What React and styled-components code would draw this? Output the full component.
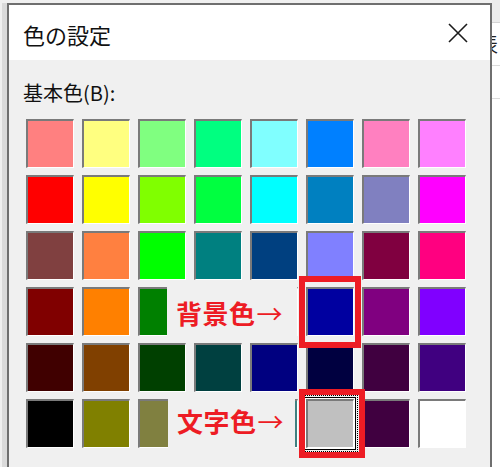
import React from 'react';
import styled, { createGlobalStyle, css } from 'styled-components';

const GlobalStyle = createGlobalStyle`
	html, body {
		margin: 0;
		padding: 0;
		background: #f0f0f0;
	}
	body {
		font-family: "Noto Sans CJK JP", "Noto Sans", sans-serif;
		width: 500px;
		height: 467px;
		overflow: hidden;
	}
`;

// Windows の基本色 48色
const COLORS = [
	['#ff8080', '#ffff80', '#80ff80', '#00ff80', '#80ffff', '#0080ff', '#ff80c0', '#ff80ff'],
	['#ff0000', '#ffff00', '#80ff00', '#00ff40', '#00ffff', '#0080c0', '#8080c0', '#ff00ff'],
	['#804040', '#ff8040', '#00ff00', '#008080', '#004080', '#8080ff', '#800040', '#ff0080'],
	['#800000', '#ff8000', '#008000', '#008040', '#0000ff', '#0000a0', '#800080', '#8000ff'],
	['#400000', '#804000', '#004000', '#004040', '#000080', '#000040', '#400040', '#400080'],
	['#000000', '#808000', '#808040', '#808080', '#408080', '#c0c0c0', '#400040', '#ffffff']
];

export default function App() {
	return (
		<>
			<GlobalStyle />
			<Desktop>
				<LeftEdge />
				<Dialog>
					{/* タイトルバー */}
					<TitleBar>
						<Title>色の設定</Title>
						<CloseButton aria-label='閉じる'>
							<svg width='20' height='20' viewBox='0 0 20 20'>
								<path d='M1 1 L19 19 M19 1 L1 19' stroke='#1b1b1b' strokeWidth='1.6' fill='none' />
							</svg>
						</CloseButton>
					</TitleBar>
					{/* 本体 */}
					<Body>
						<Label>基本色(B):</Label>
						<Palette>
							{COLORS.flat().map((c, i) => (
								<Swatch key={i} $color={c} $selected={i === 45} />
							))}
							<Note $left={141} $top={164} $w={130} $h={60}>背景色<Arrow>→</Arrow></Note>
							<Note $left={142} $top={274} $w={127} $h={55}>文字色<Arrow>→</Arrow></Note>
							<Highlight $left={273} $top={157} $w={62} $h={72} />
							<Highlight $left={273} $top={270} $w={66} $h={69} />
						</Palette>
					</Body>
				</Dialog>
				<RightEdge>
					<Behind>表</Behind>
				</RightEdge>
			</Desktop>
		</>
	);
}

const Desktop = styled.div`
	display: flex;
	width: 500px;
	height: 467px;
	background: #f0f0f0;
`;

const LeftEdge = styled.div`
	width: 5px;
	margin-left: 2px;
	margin-top: 3px;
	background: #dadada;
`;

const RightEdge = styled.div`
	flex: 1;
	overflow: hidden;
	background: #fff;
	border-top: 22px solid #ececec;
	box-shadow: inset 0 1px 0 #d4d4d4, inset 0 43px 0 #fff, inset 0 44px 0 #dcdcdc, inset 0 76px 0 #fff, inset 0 77px 0 #dcdcdc;
`;

const Behind = styled.span`
	display: block;
	margin-left: -14px;
	margin-top: 10px;
	font-size: 20px;
	line-height: 24px;
	color: #222;
`;

const Dialog = styled.div`
	width: 481px;
	margin-top: 3px;
	border: 2px solid #6f6f6f;
	border-bottom: none;
	background: #f0f0f0;
	display: flex;
	flex-direction: column;
`;

const TitleBar = styled.div`
	height: 55px;
	background: #fff;
	display: flex;
	align-items: center;
	justify-content: space-between;
	padding: 0 22px 0 14px;
`;

const Title = styled.span`
	font-size: 22px;
	line-height: 24px;
	color: #111;
	margin-top: 2px;
`;

const CloseButton = styled.span`
	display: flex;
	width: 20px;
	height: 20px;
`;

const Body = styled.div`
	padding: 20px 0 0 17px;
`;

const Label = styled.div`
	font-size: 20px;
	line-height: 26px;
	color: #111;
	margin-left: -3px;
`;

const Palette = styled.div`
	position: relative;
	display: grid;
	grid-template-columns: repeat(8, 48px);
	grid-auto-rows: 49px;
	gap: 7px 8px;
	margin-top: 13px;
`;

const Swatch = styled.div`
	box-sizing: border-box;
	background: ${p => p.$color};
	border-top: 2px solid #7a7a7a;
	border-left: 2px solid #7a7a7a;
	border-right: 1px solid #fff;
	border-bottom: 1px solid #fff;
	${p => p.$selected && css`
		box-shadow: 0 0 0 1px #fff, 0 0 0 2px #000;
		outline: 1px dotted #000;
		outline-offset: 3px;
	`}
`;

const Note = styled.div`
	position: absolute;
	left: ${p => p.$left}px;
	top: ${p => p.$top}px;
	width: ${p => p.$w}px;
	height: ${p => p.$h}px;
	background: #f0f0f0;
	box-sizing: border-box;
	padding-left: 9px;
	display: flex;
	align-items: center;
	font-size: 26px;
	font-weight: 700;
	line-height: 1;
	color: #ed1c24;
	letter-spacing: 0.5px;
`;

const Arrow = styled.span`
	font-weight: 400;
	margin-left: 1px;
`;

const Highlight = styled.div`
	position: absolute;
	left: ${p => p.$left}px;
	top: ${p => p.$top}px;
	width: ${p => p.$w}px;
	height: ${p => p.$h}px;
	box-sizing: border-box;
	border: 6px solid #ed1c24;
`;
